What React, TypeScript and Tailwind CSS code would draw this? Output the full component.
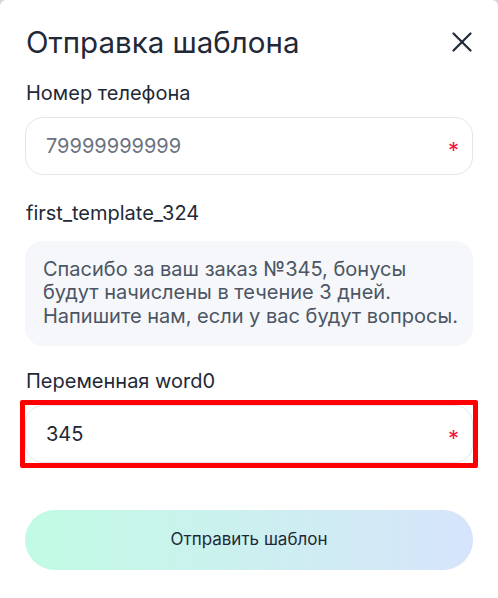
import { useState } from "react";

const font = { fontFamily: "Inter, 'Noto Sans', sans-serif" };

const Field = ({
  value,
  placeholder,
  onChange,
}: {
  value: string;
  placeholder?: string;
  onChange: (v: string) => void;
}) => (
  <div className="relative">
    <input
      value={value}
      placeholder={placeholder}
      onChange={(e) => onChange(e.target.value)}
      className="w-full h-[58px] rounded-[18px] border border-[#e3e5ea] bg-white pl-[20px] pr-[40px] text-[20px] text-[#1f2937] placeholder:text-[#6b7280] outline-none"
    />
    <span className="absolute right-[14px] top-[22px] text-[22px] leading-none text-[#f5163b]">
      *
    </span>
  </div>
);

export default function App() {
  const [phone, setPhone] = useState("");
  const [word, setWord] = useState("345");

  return (
    <div className="min-h-[598px] bg-[#d4d6da]" style={font}>
      <div className="min-h-[598px] bg-white rounded-t-[6px] px-[25px] pt-[24px] flex flex-col">
        <div className="flex items-center justify-between">
          <h2 className="text-[29.5px] leading-[36px] text-[#1f2937] pl-px">
            Отправка шаблона
          </h2>
          <button className="mr-px text-[#1f2937]">
            <svg width="20" height="20" viewBox="0 0 20 20" fill="none" stroke="currentColor" strokeWidth="2.2" strokeLinecap="round">
              <path d="M1.5 1.5 18.5 18.5" />
              <path d="M18.5 1.5 1.5 18.5" />
            </svg>
          </button>
        </div>

        <label className="mt-[21px] pl-px text-[20px] leading-[24px] text-[#1f2937]">
          Номер телефона
        </label>
        <div className="mt-[12px]">
          <Field value={phone} placeholder="79999999999" onChange={setPhone} />
        </div>

        <label className="mt-[26px] pl-px text-[20px] leading-[24px] text-[#1f2937]">
          first_template_324
        </label>
        <div className="mt-[16px] rounded-[18px] bg-[#f5f7fa] pl-[18px] pr-[10px] pt-[17px] pb-[18px] text-[20px] leading-[23.3px] text-[#4b5563]">
          Спасибо за ваш заказ №345, бонусы
          <br />
          будут начислены в течение 3 дней.
          <br />
          Напишите нам, если у вас будут вопросы.
        </div>

        <label className="mt-[23px] pl-px text-[20px] leading-[24px] text-[#1f2937]">
          Переменная word0
        </label>
        <div className="mt-[7px] -mx-[5px] border-[5px] border-[#ff0000] rounded-[2px]">
          <Field value={word} onChange={setWord} />
        </div>

        <button className="mt-[42px] h-[60px] rounded-full bg-linear-to-r from-[#c1fbe4] to-[#d6e4fb] text-[17px] text-[#1f2937]">
          Отправить шаблон
        </button>
      </div>
    </div>
  );
}
